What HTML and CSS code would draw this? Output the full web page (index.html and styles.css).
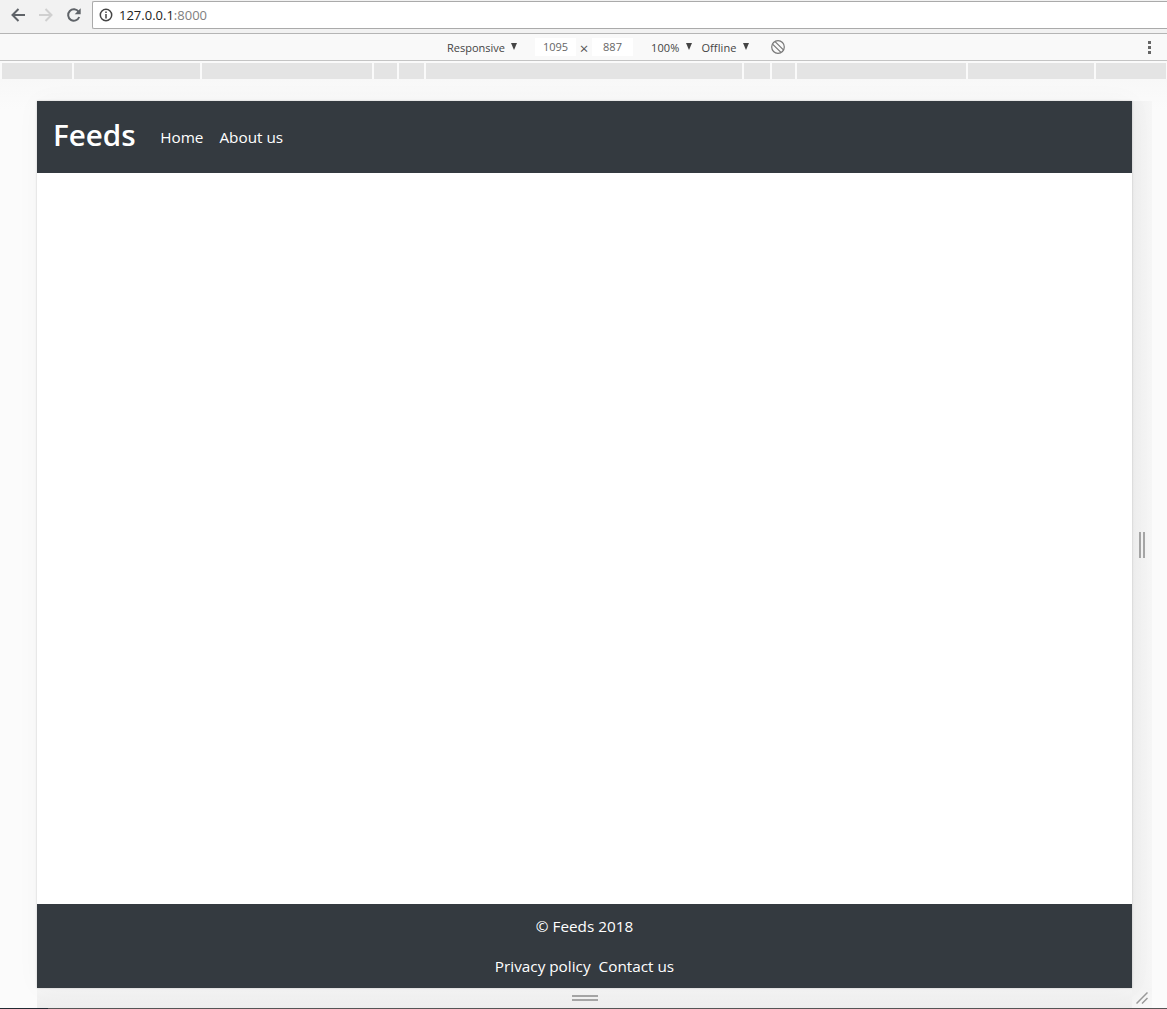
FILE: index.html
```html
<!DOCTYPE html>
<html lang="en">
<head>
  <meta charset="UTF-8">
  <title>Feeds</title>
  <link rel="stylesheet" href="styles.css">
</head>
<body>

  <!-- browser bar -->
  <div class="browser-bar">
    <svg class="nav-icon" viewBox="0 0 16 16"><path d="M15 8H2.500M8.500 2 2.500 8l6 6" fill="none" stroke="#5f6368" stroke-width="2"/></svg>
    <svg class="nav-icon" viewBox="0 0 16 16"><path d="M1 8h12.500M7.500 2l6 6-6 6" fill="none" stroke="#d0d0d0" stroke-width="2"/></svg>
    <svg class="nav-icon" viewBox="0 0 16 16"><path d="M13.200 10a5.700 5.700 0 1 1-.6-5.200" fill="none" stroke="#5f6368" stroke-width="2"/><path d="M14.700 1.200v6H8.700z" fill="#5f6368"/></svg>
    <div class="address">
      <svg class="info-icon" viewBox="0 0 14 14"><circle cx="7" cy="7" r="5.700" fill="none" stroke="#444" stroke-width="1.500"/><path d="M7 6v4.500M7 3.500v1.500" stroke="#444" stroke-width="1.500"/></svg>
      <span class="host">127.0.0.1</span><span class="port">:8000</span>
    </div>
  </div>

  <!-- device toolbar -->
  <div class="device-bar">
    <span class="device-label">Responsive</span><span class="arrow arrow-device"></span>
    <span class="size-box">1095</span>
    <span class="times">×</span>
    <span class="size-box">887</span>
    <span class="device-label zoom-label">100%</span><span class="arrow arrow-zoom"></span>
    <span class="device-label offline-label">Offline</span><span class="arrow arrow-offline"></span>
    <svg class="rotate-icon" viewBox="0 0 16 16"><circle cx="8" cy="8" r="6.300" fill="none" stroke="#777" stroke-width="1.200"/><path d="M2.800 5.300 10.700 13.200M5.300 2.800 13.200 10.700" fill="none" stroke="#777" stroke-width="1.200"/></svg>
    <span class="kebab"><i></i><i></i><i></i></span>
  </div>

  <!-- media query bar -->
  <div class="media-bar">
    <span></span><span></span><span></span><span></span><span></span><span></span><span></span><span></span><span></span><span></span><span></span>
  </div>

  <div class="stage">
    <div class="device">
      <div class="page">
        <nav class="navbar">
          <a class="brand">Feeds</a>
          <a class="nav-link">Home</a>
          <a class="nav-link">About us</a>
        </nav>
        <main class="content"></main>
        <footer class="footer">
          <p class="copy">© Feeds 2018</p>
          <p class="footer-links"><a>Privacy policy</a><a>Contact us</a></p>
        </footer>
      </div>
      <div class="handle-side"><i></i><i></i></div>
      <div class="handle-bottom"><i></i><i></i></div>
      <div class="handle-corner">
        <svg viewBox="0 0 12 12" width="12" height="12"><path d="M0.500 11.500 11.500 0.500M6 11.500l5.500-5.500" fill="none" stroke="#999" stroke-width="1.500"/></svg>
      </div>
    </div>
  </div>

  <div class="bottom-line"><span class="bottom-dark"></span></div>

</body>
</html>
```

FILE: styles.css
```css
* {
  box-sizing: border-box;
}

html, body {
  height: 100%;
}

body {
  margin: 0;
  display: flex;
  flex-direction: column;
  height: 1009px;
  overflow: hidden;
  background-color: #fafafa;
  font-family: "Open Sans", "Noto Sans", sans-serif;
}

p {
  margin: 0;
}

/* browser bar */
.browser-bar {
  height: 34px;
  flex: none;
  display: flex;
  align-items: flex-start;
  padding: 1px 0 0 10px;
  background-color: #f2f2f2;
  border-bottom: 1px solid #b5b5b5;
}

.nav-icon {
  width: 16px;
  height: 16px;
  margin: 6px 12px 0 0;
}

.address {
  flex: 1;
  height: 28px;
  margin-left: -2px;
  display: flex;
  align-items: center;
  padding-left: 6px;
  background-color: #fff;
  border: 1px solid #aaa;
  border-right: none;
  border-radius: 2px 0 0 2px;
  font-size: 13px;
}

.info-icon {
  width: 14px;
  height: 14px;
  margin-right: 6px;
}

.host {
  color: #222;
}

.port {
  color: #808080;
}

/* device toolbar */
.device-bar {
  height: 27px;
  flex: none;
  display: flex;
  align-items: center;
  padding-left: 447px;
  background-color: #f9f9f9;
  border-bottom: 1px solid #c4c4c4;
  font-size: 11px;
  color: #444;
}

.arrow {
  width: 0;
  height: 0;
  margin-left: 5px;
  margin-top: -1px;
  border-left: 3.500px solid transparent;
  border-right: 3.500px solid transparent;
  border-top: 7px solid #444;
}

.arrow-device {
  margin-left: 6px;
  margin-right: 18px;
}

.arrow-zoom {
  margin-left: 7px;
}

.arrow-offline {
  margin-left: 6px;
}

.size-box {
  width: 41px;
  height: 18px;
  line-height: 18px;
  text-align: center;
  background-color: #fff;
  color: #666;
}

.times {
  width: 16px;
  padding-top: 2px;
  text-align: center;
  font-size: 15px;
  color: #555;
}

.zoom-label {
  margin-left: 18px;
  letter-spacing: 0.1px;
}

.offline-label {
  margin-left: 9px;
  letter-spacing: 0.1px;
}

.rotate-icon {
  width: 16px;
  height: 16px;
  margin-left: 21px;
}

.kebab {
  margin-left: auto;
  margin-right: 16px;
  display: flex;
  flex-direction: column;
  gap: 2px;
}

.kebab i {
  width: 3px;
  height: 3px;
  background-color: #666;
}

/* media query bar */
.media-bar {
  flex: none;
  display: grid;
  grid-template-columns: 70px 126px 170px 23px 25px 316px 26px 23px 169px 126px 70px;
  column-gap: 2px;
  height: 18px;
  padding: 2px 0 0 2px;
  background-color: #fafafa;
}

.media-bar span {
  background-color: #e4e4e4;
}

/* device frame */
.stage {
  flex: 1;
  padding: 22px 0 0 37px;
  background: linear-gradient(#f8f8f8, #fbfbfb 30px);
}

.device {
  display: grid;
  grid-template-columns: 1095px 20px;
  grid-template-rows: 887px 20px;
}

.page {
  display: flex;
  flex-direction: column;
  background-color: #fff;
  box-shadow: 0 0 2px rgba(0, 0, 0, 0.2), 0 0 24px rgba(0, 0, 0, 0.03);
  position: relative;
}

.navbar {
  height: 72px;
  flex: none;
  display: flex;
  align-items: center;
  padding-left: 16px;
  background-color: #343a40;
  color: #fff;
}

.brand {
  font-size: 29.600px;
  font-weight: 600;
  margin-right: 24.500px;
  margin-top: -6px;
}

.nav-link {
  font-size: 15.300px;
  margin-right: 16px;
}

.content {
  flex: 1;
}

.footer {
  height: 84px;
  flex: none;
  padding-top: 10px;
  background-color: #343a40;
  color: #fff;
  font-size: 15.300px;
  line-height: 24px;
  text-align: center;
}

.footer-links {
  margin-top: 16px;
}

.footer-links a + a {
  margin-left: 8px;
}

.handle-side {
  display: flex;
  align-items: center;
  justify-content: center;
  gap: 2px;
  background: linear-gradient(to right, #efefef, #f6f6f6);
}

.handle-side i {
  width: 2px;
  height: 26px;
  background-color: #a6a6a6;
}

.handle-bottom {
  display: flex;
  flex-direction: column;
  align-items: center;
  justify-content: center;
  gap: 2px;
  background: linear-gradient(#f5f5f5, #ededed);
}

.handle-bottom i {
  width: 26px;
  height: 2px;
  background-color: #a6a6a6;
}

.handle-corner {
  display: flex;
  align-items: flex-end;
  justify-content: flex-end;
  padding: 0 4px 4px 0;
  background: linear-gradient(135deg, #f1f1f1, #f8f8f8);
}

.bottom-line {
  height: 1px;
  flex: none;
  background-color: #555;
}

.bottom-dark {
  display: block;
  width: 48px;
  height: 1px;
  background-color: #222b33;
}
```
